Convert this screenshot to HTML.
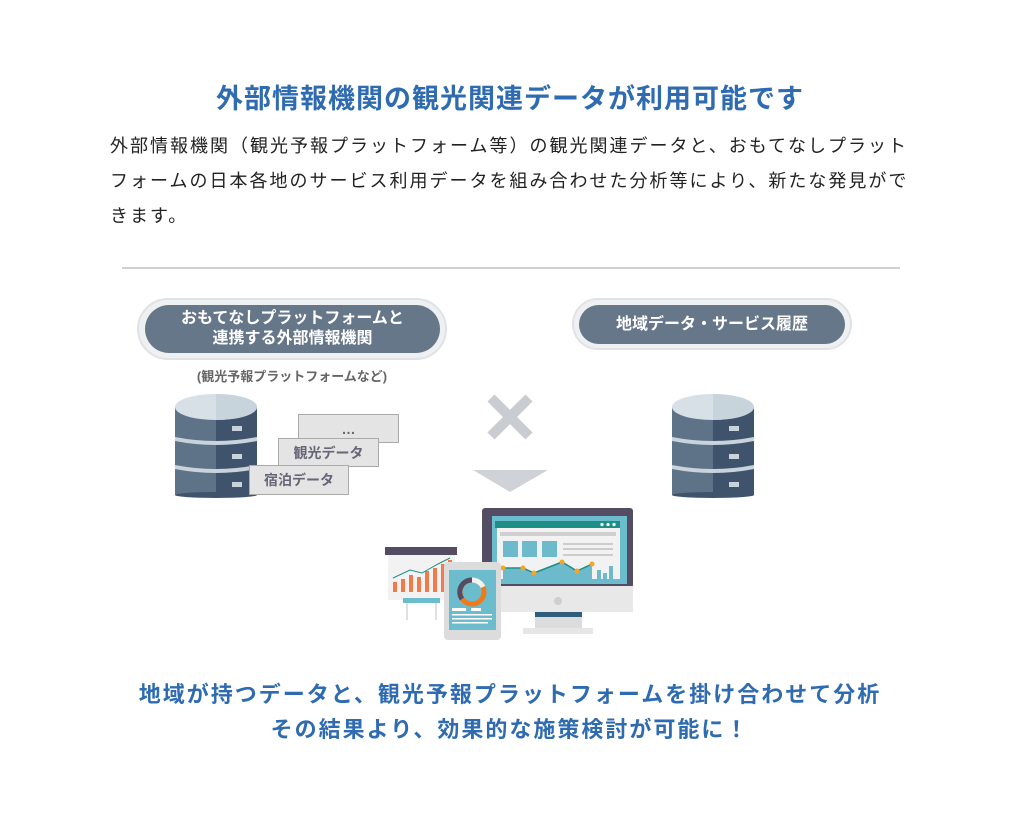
<!DOCTYPE html>
<html><head><meta charset="utf-8"><style>
*{margin:0;padding:0;box-sizing:border-box}
body{width:1020px;height:820px;background:#fff;position:relative;font-family:"Liberation Sans","Noto Sans CJK JP",sans-serif;overflow:hidden}
.a{position:absolute}
h1{position:absolute;left:0;width:1020px;top:77px;text-align:center;font-size:27px;font-weight:bold;color:#2f6bb0;letter-spacing:1px}
.p{left:110px;top:129px;width:805px;font-size:18px;line-height:35px;letter-spacing:2px;color:#222}
.pill{background:#eef0f2;border:2px solid #dfe2e6;border-radius:40px}
.pin{background:#67778a;border-radius:30px;color:#fff;font-weight:bold;text-align:center;font-size:16px;display:flex;align-items:center;justify-content:center;line-height:20px}
.card{background:#e4e4e4;border:1px solid #aaa;color:#667;font-size:14px;font-weight:bold;display:flex;align-items:center;justify-content:center}
.bt{left:0;width:1020px;text-align:center;font-size:22px;font-weight:bold;color:#2f6bb0;letter-spacing:2px}
</style></head><body>
<h1>外部情報機関の観光関連データが利用可能です</h1>
<div class="a p">外部情報機関（観光予報プラットフォーム等）の観光関連データと、おもてなしプラットフォームの日本各地のサービス利用データを組み合わせた分析等により、新たな発見ができます。</div>
<div class="a" style="left:122px;top:267px;width:778px;height:2px;background:#d0d0d0"></div>

<div class="a pill" style="left:137px;top:298px;width:310px;height:62px"></div>
<div class="a pin" style="left:145px;top:305px;width:295px;height:48px">おもてなしプラットフォームと<br>連携する外部情報機関</div>
<div class="a" style="left:137px;top:366px;width:310px;text-align:center;font-size:13px;font-weight:bold;color:#666">(観光予報プラットフォームなど)</div>

<div class="a pill" style="left:572px;top:298px;width:280px;height:52px"></div>
<div class="a pin" style="left:579px;top:305px;width:266px;height:39px">地域データ・サービス履歴</div>

<svg class="a" style="left:0;top:0" width="1020" height="820">
<defs><g id="db">
<rect x="0" y="14" width="82" height="88" fill="#5e7288"/>
<rect x="41" y="14" width="41" height="88" fill="#3f546c"/>
<ellipse cx="41" cy="102" rx="41" ry="3" fill="#3f546c"/>
<path d="M0 44 Q41 52 82 44 v4 Q41 56 0 48z" fill="#c9d3db"/>
<path d="M0 72 Q41 80 82 72 v4 Q41 84 0 76z" fill="#c9d3db"/>
<ellipse cx="41" cy="14" rx="41" ry="13" fill="#d6e0e6"/>
<path d="M41 1 A41 13 0 0 1 41 27z" fill="#c8d4dc"/>
<rect x="57" y="33" width="10" height="5" fill="#c9d3db"/>
<rect x="57" y="61" width="10" height="5" fill="#c9d3db"/>
<rect x="57" y="89" width="10" height="5" fill="#c9d3db"/>
</g></defs>
<use href="#db" x="175" y="393"/>
<use href="#db" x="672" y="393"/>
<path d="M491 398 L529 436 M529 398 L491 436" stroke="#c9ccd1" stroke-width="10"/>
<path d="M473 470 H548 L510 492z" fill="#cfd2d6"/>
<g transform="translate(380,500)">
<rect x="102" y="8" width="151" height="80" rx="3" fill="#544c63"/>
<rect x="102" y="86" width="151" height="26" fill="#e8e8e8"/>
<circle cx="178" cy="101" r="4" fill="#cfcfcf"/>
<rect x="155" y="112" width="47" height="16" fill="#dcdcdc"/>
<rect x="155" y="112" width="47" height="5" fill="#2f5f7a"/>
<rect x="143" y="128" width="70" height="6" fill="#e6e6e6"/>
<rect x="112" y="16" width="135" height="68" fill="#6bbccc"/>
<rect x="117" y="27" width="123" height="52" fill="#f2f2f2"/>
<rect x="115" y="21" width="125" height="7" fill="#1e8f86"/>
<circle cx="222" cy="24.5" r="1.6" fill="#fff"/><circle cx="228" cy="24.5" r="1.6" fill="#fff"/><circle cx="234" cy="24.5" r="1.6" fill="#fff"/>
<rect x="120" y="32" width="116" height="4" fill="#d0d0d0"/>
<rect x="123" y="41" width="15" height="16" fill="#6ebacd"/><rect x="142" y="41" width="15" height="16" fill="#6ebacd"/><rect x="162" y="41" width="15" height="16" fill="#6ebacd"/>
<rect x="183" y="43" width="50" height="2" fill="#ccc"/><rect x="183" y="48" width="50" height="2" fill="#ccc"/><rect x="183" y="54" width="50" height="2" fill="#ccc"/>
<path d="M123 75 V68 L143 68 L154 73 L182 62 L197 71 L212 64 V80 H123z" fill="#6ebacd"/>
<polyline points="123,68 143,68 154,73 182,62 197,71 212,64" fill="none" stroke="#1e8f86" stroke-width="1.5"/>
<g fill="#f5a623"><circle cx="123" cy="68" r="2.5"/><circle cx="143" cy="68" r="2.5"/><circle cx="154" cy="73" r="2.5"/><circle cx="182" cy="62" r="2.5"/><circle cx="197" cy="71" r="2.5"/><circle cx="212" cy="64" r="2.5"/></g>
<rect x="217" y="70" width="4" height="11" fill="#6ebacd"/><rect x="223" y="73" width="4" height="8" fill="#6ebacd"/><rect x="229" y="66" width="4" height="15" fill="#6ebacd"/>
<rect x="8" y="55" width="67" height="45" fill="#f2f2f2"/>
<rect x="5" y="47" width="72" height="8" fill="#544c63"/>
<g fill="#f07a4a"><rect x="13" y="82" width="4" height="10"/><rect x="21" y="79" width="4" height="13"/><rect x="29" y="75" width="4" height="17"/><rect x="37" y="77" width="4" height="15"/><rect x="45" y="71" width="4" height="21"/><rect x="53" y="68" width="4" height="24"/><rect x="61" y="64" width="4" height="28"/><rect x="68" y="60" width="4" height="32"/></g>
<polyline points="13,78 30,70 42,73 58,64 70,58" fill="none" stroke="#1e8f86" stroke-width="1"/>
<rect x="23" y="98" width="37" height="5" fill="#6bbccc"/>
<path d="M27 103 V120 M56 103 V120" stroke="#e0e0e0" stroke-width="2"/>
<rect x="64" y="62" width="57" height="78" rx="4" fill="#dcdcdc"/>
<rect x="69" y="70" width="47" height="60" fill="#6bbccc"/>
<circle cx="92" cy="92" r="12" fill="none" stroke="#f07a1a" stroke-width="5"/>
<path d="M92 80 A12 12 0 0 0 82 99" fill="none" stroke="#544c63" stroke-width="5"/>
<path d="M92 80 A12 12 0 0 1 103 87" fill="none" stroke="#f2f2f2" stroke-width="5"/>
<rect x="72" y="108" width="14" height="3" fill="#fff"/><rect x="91" y="108" width="10" height="3" fill="#fff"/>
<rect x="72" y="114" width="40" height="1.5" fill="#fff"/><rect x="72" y="118" width="40" height="1.5" fill="#fff"/><rect x="72" y="122" width="36" height="1.5" fill="#fff"/>
</g>
</svg>
<div class="a card" style="left:298px;top:414px;width:101px;height:29px">…</div>
<div class="a card" style="left:278px;top:438px;width:101px;height:29px">観光データ</div>
<div class="a card" style="left:249px;top:465px;width:100px;height:30px">宿泊データ</div>

<div class="a bt" style="top:677px">地域が持つデータと、観光予報プラットフォームを掛け合わせて分析</div>
<div class="a bt" style="top:712px">その結果より、効果的な施策検討が可能に！</div>
</body></html>
